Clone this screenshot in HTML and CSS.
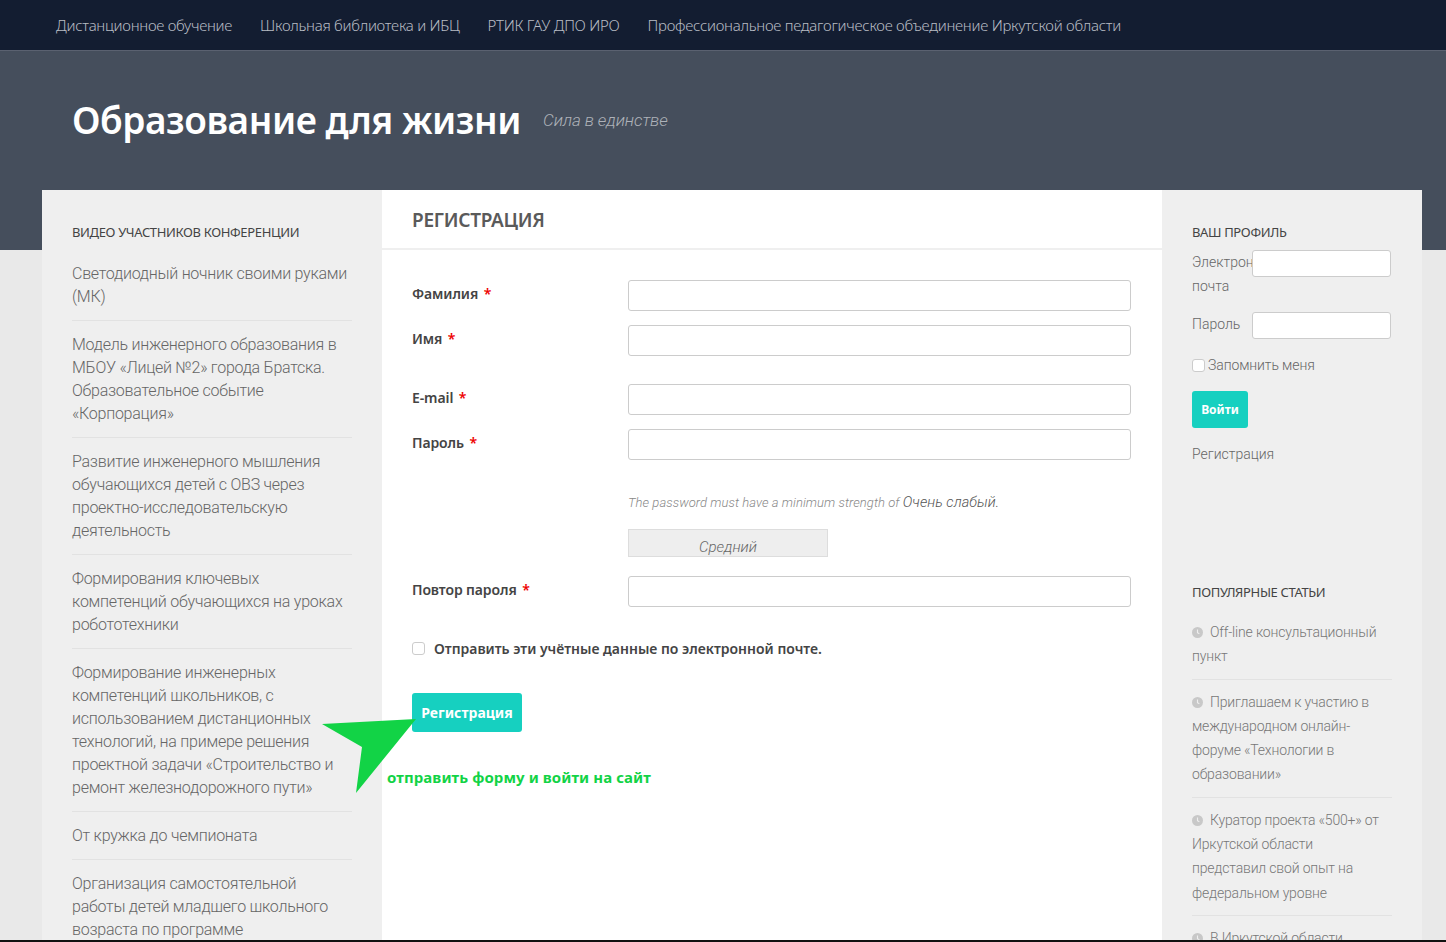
FILE: index.html
```html
<!DOCTYPE html>
<html lang="ru">
<head>
    <meta charset="UTF-8">
    <meta name="viewport" content="width=device-width, initial-scale=1.0">
    <title>Регистрация</title>
    <link rel="stylesheet" href="styles.css">
</head>
<body>
    <nav class="topbar">
        <a href="#">Дистанционное обучение</a>
        <a href="#">Школьная библиотека и ИБЦ</a>
        <a href="#">РТИК ГАУ ДПО ИРО</a>
        <a href="#">Профессиональное педагогическое объединение Иркутской области</a>
    </nav>
    <header class="site-header">
        <h1>Образование для жизни</h1>
        <span class="tagline">Сила в единстве</span>
    </header>
    <div class="wrapper">
        <aside class="sidebar-left">
            <h3 class="widget-title">Видео участников конференции</h3>
            <ul class="video-list">
                <li>Светодиодный ночник своими руками (МК)</li>
                <li>Модель инженерного образования в МБОУ «Лицей №2» города Братска. Образовательное событие «Корпорация»</li>
                <li>Развитие инженерного мышления обучающихся детей с ОВЗ через проектно-исследовательскую деятельность</li>
                <li>Формирования ключевых компетенций обучающихся на уроках робототехники</li>
                <li>Формирование инженерных компетенций школьников, с использованием дистанционных технологий, на примере решения проектной задачи «Строительство и ремонт железнодорожного пути»</li>
                <li>От кружка до чемпионата</li>
                <li>Организация самостоятельной работы детей младшего школьного возраста по программе</li>
            </ul>
        </aside>
        <main class="content">
            <h2 class="page-title">Регистрация</h2>
            <form class="reg-form">
                <div class="form-row row-gap-s">
                    <label for="surname">Фамилия <span class="req">*</span></label>
                    <input type="text" id="surname">
                </div>
                <div class="form-row row-gap-l">
                    <label for="name">Имя <span class="req">*</span></label>
                    <input type="text" id="name">
                </div>
                <div class="form-row row-gap-s">
                    <label for="email">E-mail <span class="req">*</span></label>
                    <input type="text" id="email">
                </div>
                <div class="form-row">
                    <label for="password">Пароль <span class="req">*</span></label>
                    <input type="password" id="password">
                </div>
                <p class="hint">The password must have a minimum strength of <span>Очень слабый.</span></p>
                <div class="strength">Средний</div>
                <div class="form-row">
                    <label for="password2">Повтор пароля <span class="req">*</span></label>
                    <input type="password" id="password2">
                </div>
                <label class="send-mail"><input type="checkbox"> Отправить эти учётные данные по электронной почте.</label>
                <button type="button" class="btn btn-submit">Регистрация</button>
            </form>
            <p class="note">отправить форму и войти на сайт</p>
        </main>
        <aside class="sidebar-right">
            <h3 class="widget-title">Ваш профиль</h3>
            <div class="login-row login-email">
                <label for="login">Электронная почта</label>
                <input type="text" id="login">
            </div>
            <div class="login-row">
                <label for="pass">Пароль</label>
                <input type="password" id="pass">
            </div>
            <label class="remember"><input type="checkbox">Запомнить меня</label>
            <button type="button" class="btn btn-login">Войти</button>
            <a class="reg-link" href="#">Регистрация</a>
            <h3 class="widget-title popular-title">Популярные статьи</h3>
            <ul class="popular-list">
                <li><svg class="clock" viewBox="0 0 12 12"><circle cx="6" cy="6" r="6" fill="#c8c8c8"/><path d="M6 2.6v3.6l2 1.1" fill="none" stroke="#efefef" stroke-width="1.2"/></svg>Off-line консультационный пункт</li>
                <li><svg class="clock" viewBox="0 0 12 12"><circle cx="6" cy="6" r="6" fill="#c8c8c8"/><path d="M6 2.6v3.6l2 1.1" fill="none" stroke="#efefef" stroke-width="1.2"/></svg>Приглашаем к участию в международном онлайн-форуме «Технологии в образовании»</li>
                <li><svg class="clock" viewBox="0 0 12 12"><circle cx="6" cy="6" r="6" fill="#c8c8c8"/><path d="M6 2.6v3.6l2 1.1" fill="none" stroke="#efefef" stroke-width="1.2"/></svg>Куратор проекта «500+» от Иркутской области представил свой опыт на федеральном уровне</li>
                <li><svg class="clock" viewBox="0 0 12 12"><circle cx="6" cy="6" r="6" fill="#c8c8c8"/><path d="M6 2.6v3.6l2 1.1" fill="none" stroke="#efefef" stroke-width="1.2"/></svg>В Иркутской области</li>
            </ul>
        </aside>
    </div>
    <svg class="arrow" viewBox="0 0 100 80" width="100" height="80"><polygon points="2,7 96,2 36,76 42,30" fill="#12d346"/></svg>
    <div class="bottom-line"></div>
</body>
</html>
```

FILE: styles.css
```css
* {
    box-sizing: border-box;
}
html, body {
    height: 942px;
    overflow: hidden;
}
body {
    margin: 0;
    background-color: #e9e9e9;
    font-family: Roboto, sans-serif;
    font-weight: 300;
    color: #666;
}
a {
    color: inherit;
    text-decoration: none;
}
ul {
    list-style: none;
    margin: 0;
    padding: 0;
}

/* top navigation */
.topbar {
    display: flex;
    gap: 28px;
    height: 51px;
    padding: 0 56px;
    align-items: center;
    background-color: #131d31;
    border-bottom: 1px solid #5a6170;
    font-family: "Noto Sans", sans-serif;
    font-size: 15px;
    letter-spacing: -0.27px;
    color: #b8bcc4;
}

/* header */
.site-header {
    display: flex;
    align-items: center;
    gap: 22px;
    height: 199px;
    padding: 0 72px 62px;
    background-color: #454e5c;
}
.site-header h1 {
    margin: 0;
    font-family: "Noto Sans", sans-serif;
    font-size: 37px;
    font-weight: 600;
    letter-spacing: -0.45px;
    color: #fff;
}
.tagline {
    font-size: 17px;
    font-style: italic;
    letter-spacing: -0.1px;
    color: #aeb2b9;
}

/* three columns */
.wrapper {
    display: flex;
    width: 1380px;
    margin: -60px 0 0 42px;
}
.sidebar-left {
    width: 340px;
    padding: 30px 30px 0;
    background-color: #efefef;
}
.content {
    width: 780px;
    height: 760px;
    background-color: #fff;
}
.sidebar-right {
    width: 260px;
    padding: 30px 30px 0;
    background-color: #efefef;
}
.widget-title {
    margin: 0;
    font-family: "Noto Sans", sans-serif;
    font-size: 13px;
    line-height: 24px;
    font-weight: 400;
    letter-spacing: -0.35px;
    text-transform: uppercase;
    color: #444;
}

/* left list */
.video-list {
    margin-top: 6px;
}
.video-list li {
    padding: 12px 0;
    border-bottom: 1px solid #e2e2e2;
    font-size: 16px;
    line-height: 23px;
    letter-spacing: -0.25px;
}

/* form */
.page-title {
    margin: 0;
    height: 60px;
    padding: 0 30px;
    border-bottom: 2px solid #efefef;
    font-family: "Noto Sans", sans-serif;
    font-size: 19px;
    line-height: 60px;
    font-weight: 600;
    letter-spacing: -0.3px;
    text-transform: uppercase;
    color: #5a5a5a;
}
.reg-form {
    padding: 30px 31px 0 30px;
}
.form-row {
    display: flex;
    align-items: flex-start;
    margin-bottom: 14px;
}
.form-row label {
    width: 216px;
    padding-top: 4px;
    font-family: "Noto Sans", sans-serif;
    font-size: 14px;
    font-weight: 600;
    letter-spacing: -0.1px;
    color: #444;
}
.form-row input {
    flex: 1;
    height: 31px;
    border: 1px solid #ccc;
    border-radius: 3px;
    background-color: #fff;
}
.row-gap-l {
    margin-bottom: 28px;
}
.req {
    margin-left: 2px;
    color: #e00;
}
.hint {
    margin: 33px 0 0 216px;
    font-size: 13px;
    line-height: 20px;
    font-style: italic;
    letter-spacing: 0.06px;
    color: #888;
}
.hint span {
    font-size: 14.5px;
    color: #555;
}
.strength {
    width: 200px;
    height: 28px;
    margin: 16px 0 19px 216px;
    padding-top: 7px;
    background-color: #eee;
    border: 1px solid #ddd;
    font-size: 15px;
    line-height: 20px;
    font-style: italic;
    text-align: center;
    color: #666;
}
input[type="checkbox"] {
    appearance: none;
    width: 13px;
    height: 13px;
    background-color: #fff;
    border: 1px solid #ccc;
    border-radius: 3px;
}
.send-mail {
    display: flex;
    align-items: center;
    gap: 9px;
    margin-top: 32px;
    font-family: "Noto Sans", sans-serif;
    font-size: 14px;
    font-weight: 600;
    color: #444;
}
.send-mail input {
    margin: 0;
}
.btn {
    display: block;
    border: none;
    border-radius: 3px;
    background-color: #16d0c0;
    font-family: "Noto Sans", sans-serif;
    font-weight: 700;
    color: #fff;
}
.btn-submit {
    width: 110px;
    height: 39px;
    margin-top: 35px;
    font-size: 14px;
}
.note {
    margin: 35px 0 0 5px;
    font-family: "Noto Sans", sans-serif;
    font-size: 15px;
    font-weight: 700;
    letter-spacing: 0.08px;
    color: #12d346;
}

/* right column */
.login-row {
    display: flex;
    align-items: flex-start;
    margin-bottom: 14px;
    font-size: 14px;
    line-height: 24px;
}
.login-row label {
    width: 60px;
    flex-shrink: 0;
    white-space: normal;
}
.login-email {
    margin-top: 6px;
    height: 48px;
    overflow: visible;
}
.login-row input {
    width: 139px;
    height: 27px;
    border: 1px solid #ccc;
    border-radius: 3px;
    background-color: #fff;
}
.remember {
    display: flex;
    align-items: center;
    margin-top: 16px;
    font-size: 14px;
    line-height: 20px;
    letter-spacing: -0.1px;
}
.remember input {
    margin: 0 3px 0 0;
}
.btn-login {
    width: 56px;
    height: 37px;
    margin-top: 16px;
    font-size: 12px;
}
.reg-link {
    display: block;
    margin-top: 16px;
    font-size: 14px;
    line-height: 20px;
}
.popular-title {
    margin-top: 116px;
}
.popular-list {
    margin-top: 6px;
}
.popular-list li {
    padding: 10px 6px 10px 0;
    border-bottom: 1px solid #e2e2e2;
    font-size: 14px;
    line-height: 24.3px;
    letter-spacing: -0.17px;
    color: #777;
}
.clock {
    width: 11px;
    height: 11px;
    margin-right: 7px;
    vertical-align: -1px;
}

/* annotation over the form */
.arrow {
    position: absolute;
    left: 320px;
    top: 717px;
}
.bottom-line {
    position: fixed;
    left: 0;
    right: 0;
    bottom: 0;
    height: 2px;
    background-color: #111;
}
```
